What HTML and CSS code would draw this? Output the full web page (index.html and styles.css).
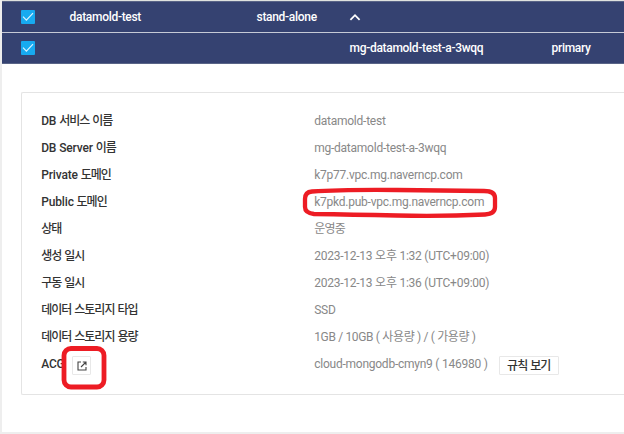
FILE: index.html
```html
<!DOCTYPE html>
<html lang="ko">
<head>
<meta charset="utf-8">
<title>DB Server</title>
<link rel="stylesheet" href="styles.css">
</head>
<body>
<main class="page">
  <div class="row">
    <span class="check"><svg width="14" height="14" viewBox="0 0 14 14"><path d="M2 6.7 5.4 10.2 12 3.2"/></svg></span>
    <span class="service">datamold-test</span>
    <span class="type">stand-alone</span>
    <svg class="chevron" width="12" height="8" viewBox="0 0 12 8"><path d="M1.4 6.8 6 2.2 10.6 6.8"/></svg>
  </div>
  <div class="row row-server">
    <span class="check"><svg width="14" height="14" viewBox="0 0 14 14"><path d="M2 6.7 5.4 10.2 12 3.2"/></svg></span>
    <span class="server">mg-datamold-test-a-3wqq</span>
    <span class="role">primary</span>
  </div>
  <dl class="details">
    <dt>DB <span class="ko">서비스 이름</span></dt><dd>datamold-test</dd>
    <dt>DB Server <span class="ko">이름</span></dt><dd>mg-datamold-test-a-3wqq</dd>
    <dt>Private <span class="ko">도메인</span></dt><dd>k7p77.vpc.mg.naverncp.com</dd>
    <dt>Public <span class="ko">도메인</span></dt><dd><span class="marked">k7pkd.pub-vpc.mg.naverncp.com<svg class="mark mark-domain" width="196" height="32" viewBox="0 0 196 32"><path d="M10 4.5Q40 2.5 95 3T182 4Q193 4 193 11V20Q193 27 183 27.5Q140 29.5 95 28.5T12 27Q3 26 3 20V12Q3 5 10 4.5Z"/></svg></span></dd>
    <dt><span class="ko">상태</span></dt><dd><span class="ko">운영중</span></dd>
    <dt><span class="ko">생성 일시</span></dt><dd>2023-12-13 오후 1:32 (UTC+09:00)</dd>
    <dt><span class="ko">구동 일시</span></dt><dd>2023-12-13 오후 1:36 (UTC+09:00)</dd>
    <dt><span class="ko">데이터 스토리지 타입</span></dt><dd>SSD</dd>
    <dt><span class="ko">데이터 스토리지 용량</span></dt><dd class="capacity">1GB / 10GB ( 사용량 ) / ( 가용량 )</dd>
    <dt class="acg"><span class="acg-name">ACG</span><button class="open" aria-label="ACG"><svg width="10" height="10" viewBox="0 0 10 10"><path d="M4 1H1V9H9V6M5.8 1H9V4.2M9 1 4 6"/></svg></button><svg class="mark mark-acg" width="46" height="44" viewBox="0 0 46 44"><rect x="3" y="2.5" width="40" height="38.5" rx="7"/></svg></dt>
    <dd>cloud-mongodb-cmyn9 ( 146980 )<button class="rules">규칙 보기</button></dd>
  </dl>
</main>
</body>
</html>
```
FILE: styles.css
```css
* {
  box-sizing: border-box;
}

body {
  margin: 0;
  height: 434px;
  overflow: hidden;
  background: #eee;
  font: 12px/16px Roboto, "Noto Sans CJK KR", sans-serif;
  letter-spacing: -0.24px;
}

.page {
  height: 432px;
  margin-left: 2px;
  background: #fff;
  border-top: 1px solid #dfe2df;
}

.row {
  display: flex;
  align-items: center;
  height: 32px;
  padding-left: 19px;
  background: #354271;
  border-top: 1px solid #596487;
  border-bottom: 1px solid #c6cad6;
  color: #fff;
  font-weight: 500;
  letter-spacing: -0.3px;
  white-space: nowrap;
}

.row-server {
  height: 31px;
  border-top: 0;
  border-bottom: 1px solid #596487;
}

.check {
  width: 14px;
  height: 14px;
  border-radius: 1px;
  background: #17aaf0;
}

svg {
  display: block;
  fill: none;
}

.check svg {
  stroke: #d9f2ff;
  stroke-width: 1.2;
}

.service {
  width: 187px;
  margin-left: 34.5px;
}

.type {
  width: 92.5px;
}

.chevron {
  stroke: #fff;
  stroke-width: 1.8;
}

.server {
  width: 202px;
  margin-left: 314.5px;
}

.details {
  display: grid;
  grid-template-columns: 273px 1fr;
  grid-auto-rows: 27px;
  align-items: center;
  height: 303px;
  margin: 28px 0 0 19px;
  padding: 14px 0 0 19.2px;
  border: 1px solid #e4e4e4;
  border-right: 0;
  border-radius: 2px 0 0 2px;
  white-space: nowrap;
}

dt {
  color: #333;
  font-weight: 500;
  letter-spacing: -0.15px;
}

dd {
  display: flex;
  align-items: center;
  margin: 0;
  color: #888;
}

.ko {
  letter-spacing: -1px;
  word-spacing: 1px;
}

dd .ko {
  letter-spacing: -0.8px;
}

.capacity {
  letter-spacing: -0.34px;
}

.marked,
.acg {
  position: relative;
}

.acg {
  display: flex;
  align-items: center;
}

.acg-name {
  width: 31px;
}

.mark {
  position: absolute;
  stroke: #ed1c24;
}

.mark-domain {
  left: -12px;
  top: -7px;
  stroke-width: 4.3;
}

.mark-acg {
  left: 19.4px;
  top: -6px;
  stroke-width: 4.8;
}

.open,
.rules {
  height: 19px;
  padding: 0;
  background: #fff;
  border: 1px solid #e8e8e8;
  border-radius: 1px;
}

.open {
  display: grid;
  place-items: center;
  width: 19px;
  margin-top: 4px;
}

.open svg {
  stroke: #444;
  stroke-width: 1.1;
}

.rules {
  width: 60px;
  margin: 4px 0 0 11px;
  color: #333;
  font: 500 12px/16px Roboto, "Noto Sans CJK KR", sans-serif;
  letter-spacing: -1px;
  word-spacing: 1px;
}
```
